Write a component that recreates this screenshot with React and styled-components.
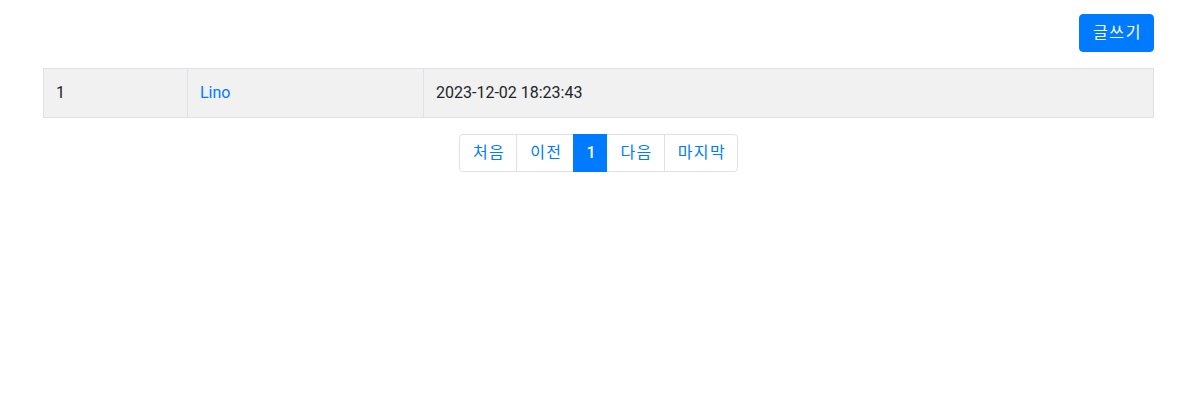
import styled, { createGlobalStyle } from "styled-components";

const GlobalStyle = createGlobalStyle`
  body {
    margin: 0;
    background: #fff;
    font-family: Roboto, "Noto Sans CJK KR", sans-serif;
    font-size: 16px;
    line-height: 1.5;
    color: #212529;
  }
`;

const Container = styled.div`
  width: 1111px;
  margin-left: 43px;
  padding-top: 14px;
`;

const Toolbar = styled.div`
  display: flex;
  justify-content: flex-end;
  margin-bottom: 16px;
`;

const Button = styled.button`
  height: 38px;
  padding: 0 11px 0 13px;
  border: 1px solid #007bff;
  border-radius: 4px;
  background: #007bff;
  color: #fff;
  font-family: inherit;
  font-size: 16px;
  line-height: 1.5;
  letter-spacing: 1.6px;
  cursor: pointer;
`;

const Table = styled.table`
  width: 100%;
  border-collapse: collapse;
  margin-bottom: 16px;
`;

const Row = styled.tr`
  background: #f1f1f1;
`;

const Cell = styled.td`
  border: 1px solid #dee2e6;
  padding: 12px;
  height: 24px;
  width: ${(p) => p.$width || "auto"};
  color: #212529;
  vertical-align: middle;
`;

const NameLink = styled.a`
  color: #007bff;
  text-decoration: none;
`;

const Pagination = styled.ul`
  display: flex;
  justify-content: center;
  list-style: none;
  margin: 0;
  padding: 0;
`;

const PageItem = styled.li`
  & + & a {
    margin-left: -1px;
  }
  &:first-child a {
    border-top-left-radius: 4px;
    border-bottom-left-radius: 4px;
  }
  &:last-child a {
    border-top-right-radius: 4px;
    border-bottom-right-radius: 4px;
  }
`;

const PageLink = styled.a`
  display: block;
  position: relative;
  padding: 8px ${(p) => (p.$active ? "12px" : "11px 8px 13px")};
  line-height: 20px;
  border: 1px solid ${(p) => (p.$active ? "#007bff" : "#dee2e6")};
  background: ${(p) => (p.$active ? "#007bff" : "#fff")};
  color: ${(p) => (p.$active ? "#fff" : "#007bff")};
  font-weight: ${(p) => (p.$active ? 500 : 400)};
  letter-spacing: ${(p) => (p.$active ? "-1px" : "1.4px")};
  z-index: ${(p) => (p.$active ? 1 : 0)};
  text-decoration: none;
  cursor: pointer;
`;

const pages = [
  { label: "처음" },
  { label: "이전" },
  { label: "1", active: true },
  { label: "다음" },
  { label: "마지막" },
];

export default function App() {
  return (
    <>
      <GlobalStyle />
      <Container>
        <Toolbar>
          <Button>글쓰기</Button>
        </Toolbar>
        <Table>
          <tbody>
            <Row>
              <Cell $width="119px">1</Cell>
              <Cell $width="211px">
                <NameLink href="#">Lino</NameLink>
              </Cell>
              <Cell>2023-12-02 18:23:43</Cell>
            </Row>
          </tbody>
        </Table>
        <Pagination>
          {pages.map((p) => (
            <PageItem key={p.label}>
              <PageLink $active={p.active}>{p.label}</PageLink>
            </PageItem>
          ))}
        </Pagination>
      </Container>
    </>
  );
}
